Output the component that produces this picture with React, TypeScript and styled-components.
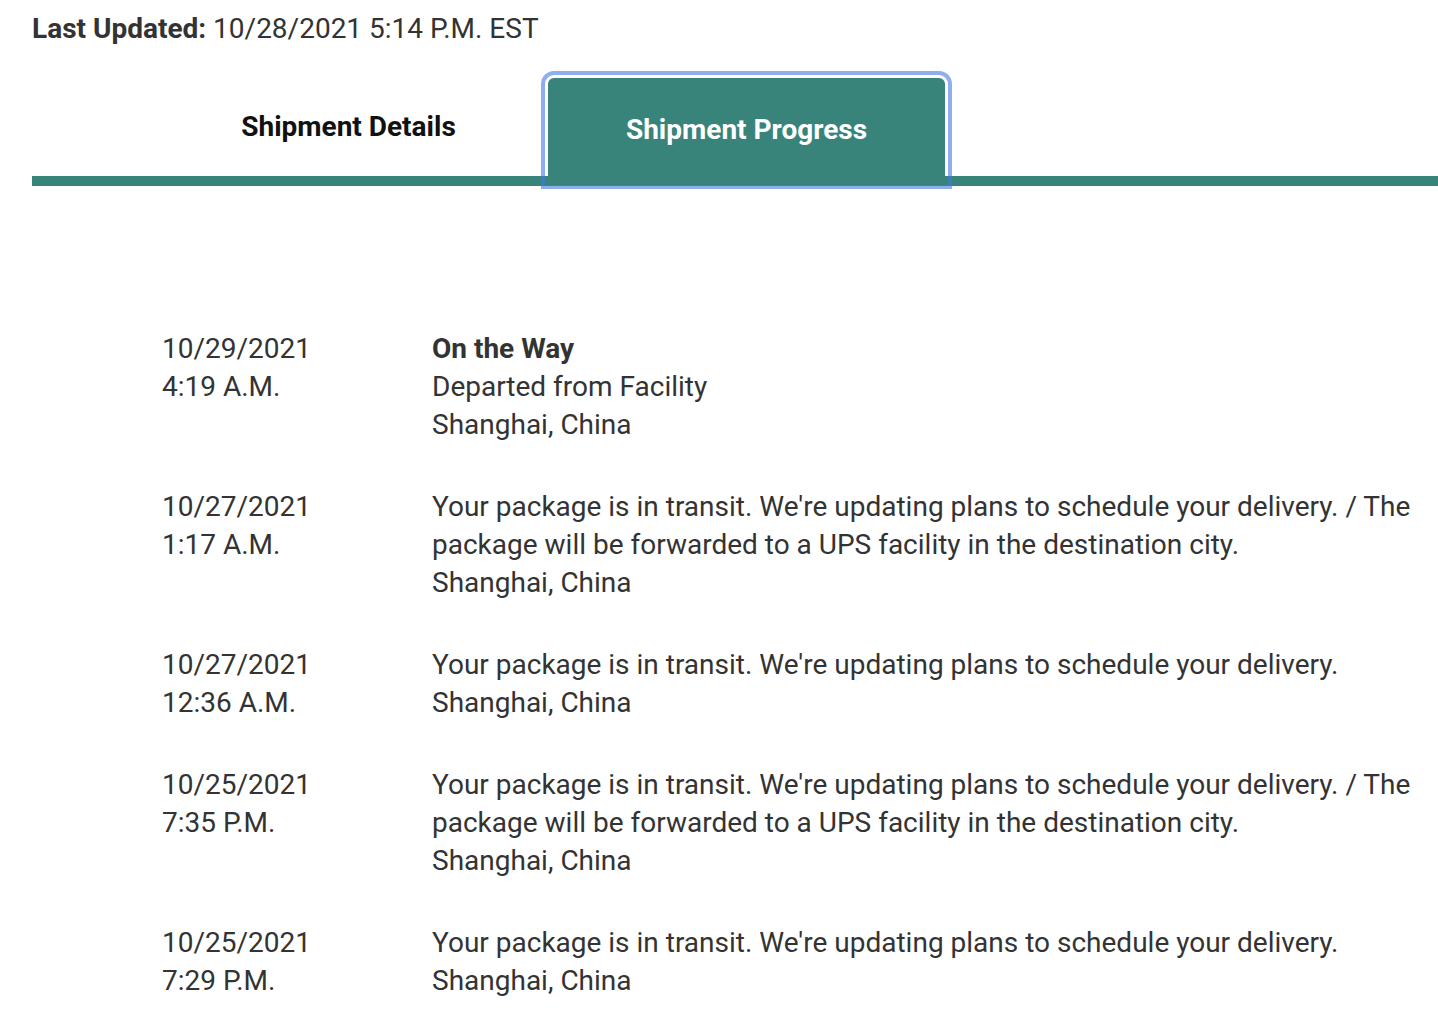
import React, { useState } from "react"
import styled, { createGlobalStyle } from "styled-components"

const GlobalStyle = createGlobalStyle`
    html, body {
        margin: 0;
        padding: 0;
        background: #ffffff;
        font-family: Roboto, "Noto Sans", Arial, sans-serif;
        color: #333333;
        overflow-x: hidden;
    }
`

const teal = "#38847b"

const Page = styled.div`
    padding: 0 0 40px 32px;
`

const Updated = styled.p`
    margin: 0;
    font-size: 28px;
    line-height: 58px;
    color: #333333;

    b {
        font-weight: 700;
    }
`

const TabList = styled.div`
    display: flex;
    align-items: flex-end;
    margin-top: 20px;
    padding-left: 118px;
    height: 98px;
    border-bottom: 10px solid ${teal};
`

const Tab = styled.button<{active?: boolean}>`
    width: 397px;
    height: 104px;
    margin: 0 1px -6px 0;
    padding: 0 0 ${(props) => props.active ? "2px" : "8px"};
    border: none;
    border-radius: 6px 6px 0 0;
    background: ${(props) => props.active ? teal : "transparent"};
    color: ${(props) => props.active ? "#ffffff" : "#111111"};
    font-family: Roboto, "Noto Sans", Arial, sans-serif;
    font-size: 28px;
    font-weight: 700;
    cursor: pointer;
    outline: ${(props) => props.active ? "4px solid rgba(66, 120, 230, 0.6)" : "none"};
    outline-offset: 3px;
`

const Timeline = styled.div`
    margin-top: 144px;
    padding-left: 130px;
    display: flex;
    flex-direction: column;
    gap: 44px;
`

const Row = styled.div`
    display: grid;
    grid-template-columns: 270px 1000px;
    font-size: 28px;
    line-height: 38px;
`

const When = styled.div`
    display: flex;
    flex-direction: column;
`

const Info = styled.div`
    display: flex;
    flex-direction: column;
`

const Status = styled.span`
    font-weight: 700;
`

type Event = {
    date: string
    time: string
    status?: string
    text: string
    place: string
}

const transit = "Your package is in transit. We're updating plans to schedule your delivery."
const forwarded = transit + " / The package will be forwarded to a UPS facility in the destination city."

const events: Event[] = [
    {date: "10/29/2021", time: "4:19 A.M.", status: "On the Way", text: "Departed from Facility", place: "Shanghai, China"},
    {date: "10/27/2021", time: "1:17 A.M.", text: forwarded, place: "Shanghai, China"},
    {date: "10/27/2021", time: "12:36 A.M.", text: transit, place: "Shanghai, China"},
    {date: "10/25/2021", time: "7:35 P.M.", text: forwarded, place: "Shanghai, China"},
    {date: "10/25/2021", time: "7:29 P.M.", text: transit, place: "Shanghai, China"},
]

const App: React.FC = () => {
    const [tab, setTab] = useState(1)

    return (
        <Page>
            <GlobalStyle/>
            <Updated><b>Last Updated:</b> 10/28/2021 5:14 P.M. EST</Updated>
            <TabList>
                {["Shipment Details", "Shipment Progress"].map((name, i) => (
                    <Tab key={name} active={tab === i} onClick={() => setTab(i)}>{name}</Tab>
                ))}
            </TabList>
            <Timeline>
                {events.map((e, i) => (
                    <Row key={i}>
                        <When>
                            <span>{e.date}</span>
                            <span>{e.time}</span>
                        </When>
                        <Info>
                            {e.status && <Status>{e.status}</Status>}
                            <span>{e.text}</span>
                            <span>{e.place}</span>
                        </Info>
                    </Row>
                ))}
            </Timeline>
        </Page>
    )
}

export default App
